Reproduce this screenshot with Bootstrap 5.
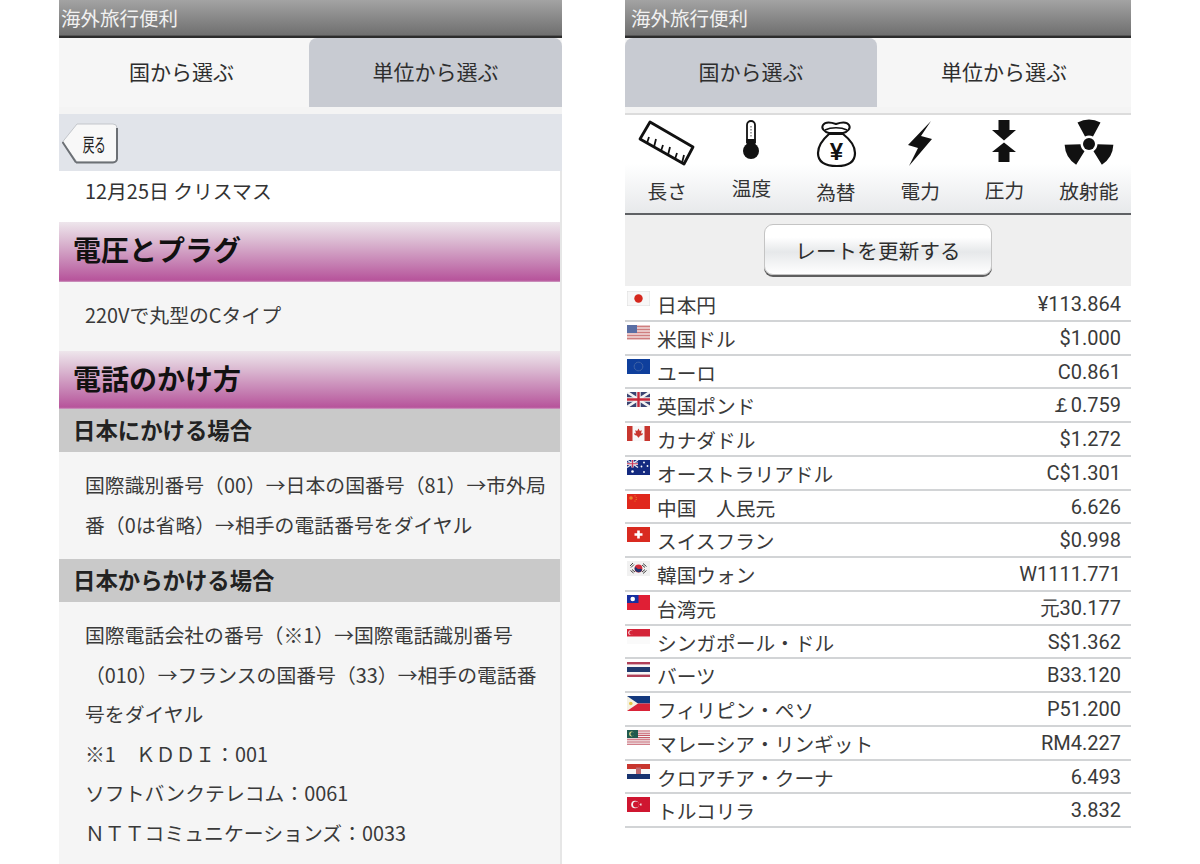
<!DOCTYPE html>
<html lang="ja">
<head>
<meta charset="utf-8">
<title>海外旅行便利</title>
<link rel="stylesheet" href="https://cdn.jsdelivr.net/npm/bootstrap@5.3.0/dist/css/bootstrap.min.css">
<style>
html,body{height:864px;overflow:hidden;background:#fff}
body{font-family:"Noto Sans CJK JP","Noto Sans",sans-serif;color:#333;font-size:19.85px}
.stage{padding-left:59px;gap:63px;height:864px}
.phone-l{width:503px;height:864px;overflow:hidden;flex:none}
.phone-r{width:506px;height:864px;overflow:hidden;flex:none}
.appbar{height:38px;background:linear-gradient(#a3a3a3,#6e6e6e);border-bottom:2px solid #2c2c2c;box-shadow:inset 0 -1px 0 #555;color:#f1f1f1;font-size:19.5px;line-height:35px;padding-left:2px;box-sizing:border-box}
.phone-r .appbar{padding-left:6px}
.tabset{height:69px;background:#f6f6f6}
.tabcell{flex:1 1 50%;font-size:21px;line-height:67px;text-align:center;color:#2e2e2e;background:#f6f6f6}
.tab-off{background:#c8cbd2;border-radius:8px 8px 0 0}
.phone-l .tabcell:first-child{flex:0 0 250px;padding-right:5px}
.phone-r .tabcell:first-child{flex:0 0 252px}
.stripe{height:7px;background:#f4f4f4}
.backbar{height:57px;background:#e1e4ea;padding:9px 0 0 3px}
.backbtn{position:relative;width:56px;height:42px;padding:0 0 0 8px;font-size:19px;line-height:34px;color:#222;border:0;background:none;border-radius:0;text-align:center}
.backbtn svg{position:absolute;left:0;top:0}
.backbtn span{position:relative;display:inline-block;transform:scaleX(.62);letter-spacing:-1px}
.sheet{border-right:2px solid #e6e6e6}
.txt-w{height:51px;background:#fff;padding-left:26px;line-height:40px}
.band{height:60px;background:linear-gradient(#eee6ec 0%,#dcbcd3 30%,#c57fb2 70%,#b7549b 97%,#cfa0c4 100%);font-size:28px;font-weight:700;color:#111;line-height:55px;padding-left:14px}
.band-b{height:58px;line-height:54px}
.subband{height:43px;background:#c9c9c9;font-size:22.4px;font-weight:700;color:#222;line-height:41px;padding-left:14px}
.para{background:#f5f5f5;padding:13px 8px 15px 26px;line-height:39.5px;color:#3a3a3a}
.para-v{height:69px;padding-top:13px}
.para-tall{height:270px}
.gap8{height:8px;background:#f4f4f4;border-bottom:2px solid #dcdcdc}
.iconrow{height:100px;background:linear-gradient(#fff 0%,#fff 50%,#e7e9eb 100%);border-bottom:2px solid #5f6164;padding-top:3px;box-sizing:border-box}
.iconcell{text-align:center;height:95px}
.iconcell svg{display:block;width:84px;height:52px;margin:0 auto}
.lbl{display:block;font-size:19.7px;line-height:24px;color:#333;margin-top:9px}
.lbl-up{margin-top:6px}
.lbl-dn{margin-top:10px}
.lbl-dn1{margin-top:8px}
.ratebar{height:71px;background:#efefef;padding-top:9px;text-align:center}
.ratebtn{width:228px;height:51px;padding:0;background:linear-gradient(#fff 0%,#fff 25%,#e6e8ea 55%,#fff 100%);border:1px solid #c4c4c4;border-radius:9px;box-shadow:0 2px 0 #5f5f5f;font-size:20.5px;letter-spacing:.2px;line-height:46px;color:#2d2d2d}
.rates{--bs-list-group-border-radius:0;background:#fff}
.rate-row{height:33.75px;padding:0 10px 0 2px;border:0;border-bottom:2px solid #d2d4d6;align-items:flex-start;color:#3a3a3a;font-size:19.7px;background:transparent;box-sizing:border-box}
.rate-row svg{flex:none;width:23px;height:15px;margin-top:3px}
.rate-name{margin-left:7px;line-height:33px;white-space:pre}
.rate-num{margin-left:auto;line-height:33px;font-family:Roboto,"Noto Sans",sans-serif;font-size:20px}
.phone-r .list-group{margin-top:2px}
</style>
</head>
<body>
<div class="d-flex stage">

<section class="phone-l">
  <div class="appbar">海外旅行便利</div>
  <div class="d-flex tabset">
    <div class="tabcell">国から選ぶ</div>
    <div class="tabcell tab-off">単位から選ぶ</div>
  </div>
  <div class="stripe"></div>
  <div class="backbar">
    <button class="btn backbtn" type="button">
      <svg width="56" height="42" viewBox="0 0 56 42"><path d="M0.5 19 15 1H51a4 4 0 0 1 4 4V35a4 4 0 0 1-4 4H15Z" fill="#f8f8f8" stroke="#c3c6cb"/><path d="M14 39.500H51a4 4 0 0 0 4-4V5M.5 19 14 39.500" fill="none" stroke="#6c7075" stroke-width="2"/></svg>
      <span>戻る</span>
    </button>
  </div>
  <div class="sheet">
    <div class="txt-w">12月25日 クリスマス</div>
    <div class="band">電圧とプラグ</div>
    <div class="para para-v">220Vで丸型のCタイプ</div>
    <div class="band band-b">電話のかけ方</div>
    <div class="subband">日本にかける場合</div>
    <div class="para">国際識別番号（00）→日本の国番号（81）→市外局番（0は省略）→相手の電話番号をダイヤル</div>
    <div class="subband">日本からかける場合</div>
    <div class="para para-tall">国際電話会社の番号（※1）→国際電話識別番号（010）→フランスの国番号（33）→相手の電話番号をダイヤル<br>※1　ＫＤＤＩ：001<br>ソフトバンクテレコム：0061<br>ＮＴＴコミュニケーションズ：0033</div>
  </div>
</section>

<section class="phone-r">
  <div class="appbar">海外旅行便利</div>
  <div class="d-flex tabset">
    <div class="tabcell tab-off">国から選ぶ</div>
    <div class="tabcell">単位から選ぶ</div>
  </div>
  <div class="gap8"></div>
  <div class="row g-0 iconrow">
    <div class="col-2 iconcell">
      <svg viewBox="625 118 84 52"><g fill="none" stroke="#111" stroke-width="2.8" stroke-linejoin="round"><path d="M650 122 693 147 684 164 640 139Z"/></g><g stroke="#111" stroke-width="1.8"><path d="M647 143 649 137M654 147 656 139M661 151 663 145M668 155 670 147M675 159 677 153M682 163 684 155"/></g></svg>
      <span class="lbl">長さ</span>
    </div>
    <div class="col-2 iconcell">
      <svg viewBox="709 118 84 52"><path d="M747 125a4 4 0 0 1 8 0V142h-8Z" fill="#fff" stroke="#111" stroke-width="1.8"/><rect x="746.500" y="139" width="9" height="10" fill="#111"/><circle cx="751" cy="151" r="8" fill="#111"/><path d="M751 126v12" stroke="#888" stroke-width="1.500" stroke-dasharray="1.500 1.500"/></svg>
      <span class="lbl lbl-up">温度</span>
    </div>
    <div class="col-2 iconcell">
      <svg viewBox="793 118 84 52"><path d="M828 133C823 132 820 128 822 125 824 122 829 122 835 124 841 122 846 122 848 125 850 128 847 132 842 133Z" fill="#fff" stroke="#111" stroke-width="2"/><path d="M824 130C830 127 840 127 846 130" fill="none" stroke="#111" stroke-width="1.600"/><path d="M828 134C820 141 817 147 817 153 817 162 824 166 836 166 847 166 854 162 854 153 854 147 851 141 842 134Z" fill="#fff" stroke="#111" stroke-width="2.200"/><text x="835.500" y="160" text-anchor="middle" font-family="Liberation Sans,sans-serif" font-weight="700" font-size="24" fill="#111">¥</text></svg>
      <span class="lbl lbl-dn">為替</span>
    </div>
    <div class="col-2 iconcell">
      <svg viewBox="878 118 84 52"><path d="M931 121 908 145 918 148 909 166 932 139 921 136Z" fill="#111"/></svg>
      <span class="lbl">電力</span>
    </div>
    <div class="col-2 iconcell">
      <svg viewBox="962 118 84 52"><path d="M998.500 120H1009.500V130H1016L1004 140.500 992 130H998.500ZM1004 142.500 1016 152H1009.500V162H998.500V152H992Z" fill="#111"/></svg>
      <span class="lbl lbl-dn1">圧力</span>
    </div>
    <div class="col-2 iconcell">
      <svg viewBox="1046 118 84 52"><g fill="#111"><circle cx="1088" cy="144" r="6"/><path d="M1084 136.500 1076.500 122.500A25 25 0 0 1 1099.500 122.500L1092 136.500A9 9 0 0 0 1084 136.500Z"/><path d="M1084 136.500 1076.500 122.500A25 25 0 0 1 1099.500 122.500L1092 136.500A9 9 0 0 0 1084 136.500Z" transform="rotate(120 1088 144)"/><path d="M1084 136.500 1076.500 122.500A25 25 0 0 1 1099.500 122.500L1092 136.500A9 9 0 0 0 1084 136.500Z" transform="rotate(240 1088 144)"/></g></svg>
      <span class="lbl">放射能</span>
    </div>
  </div>
  <div class="ratebar"><button class="btn ratebtn" type="button">レートを更新する</button></div>
  <ul class="list-group rates">
    <li class="list-group-item d-flex rate-row"><svg viewBox="0 0 23 15"><rect width="23" height="15" fill="#f7f7f7" stroke="#ddd"/><circle cx="11.500" cy="7.500" r="4.200" fill="#d5271d"/></svg><span class="rate-name">日本円</span><span class="rate-num">¥113.864</span></li>
    <li class="list-group-item d-flex rate-row"><svg viewBox="0 0 23 15"><rect width="23" height="15" fill="#f0dcdc"/><path d="M0 1.500H23M0 4.500H23M0 7.500H23M0 10.500H23M0 13.500H23" stroke="#cf7f80" stroke-width="1.400"/><rect width="10" height="8" fill="#5a6fa5"/></svg><span class="rate-name">米国ドル</span><span class="rate-num">$1.000</span></li>
    <li class="list-group-item d-flex rate-row"><svg viewBox="0 0 23 15"><rect width="23" height="15" fill="#0f3f9c"/><circle cx="11.500" cy="7.500" r="4.300" fill="none" stroke="#7d8fb0" stroke-width=".9" stroke-dasharray="1 1.200"/></svg><span class="rate-name">ユーロ</span><span class="rate-num">C0.861</span></li>
    <li class="list-group-item d-flex rate-row"><svg viewBox="0 0 23 15"><rect width="23" height="15" fill="#3a4472"/><path d="M0 0 23 15M23 0 0 15" stroke="#f4f4f4" stroke-width="2.600"/><path d="M11.500 0V15M0 7.500H23" stroke="#f4f4f4" stroke-width="4.400"/><path d="M11.500 0V15M0 7.500H23" stroke="#c6283a" stroke-width="2.400"/></svg><span class="rate-name">英国ポンド</span><span class="rate-num">￡0.759</span></li>
    <li class="list-group-item d-flex rate-row"><svg viewBox="0 0 23 15"><rect width="23" height="15" fill="#f7f7f7"/><rect width="5.500" height="15" fill="#c8362f"/><rect x="17.500" width="5.500" height="15" fill="#c8362f"/><path d="M11.500 2.500 12.800 5 14.800 4.300 14 7.500 16 7.200 15.300 9 13 9.800 11.900 11.600H11.100L10 9.800 7.700 9 7 7.200 9 7.500 8.200 4.300 10.200 5Z" fill="#c8362f"/></svg><span class="rate-name">カナダドル</span><span class="rate-num">$1.272</span></li>
    <li class="list-group-item d-flex rate-row"><svg viewBox="0 0 23 15"><rect width="23" height="15" fill="#142a80"/><path d="M0 0 11 7.500M11 0 0 7.500" stroke="#e8e8ee" stroke-width="1.400"/><path d="M5.500 0V7.500M0 3.750H11" stroke="#e8e8ee" stroke-width="2.400"/><path d="M5.500 0V7.500M0 3.750H11" stroke="#c9385a" stroke-width="1.200"/><g fill="#fff"><circle cx="5.500" cy="11.500" r="1.300"/><circle cx="17" cy="2.500" r=".9"/><circle cx="20.500" cy="6" r=".9"/><circle cx="14.500" cy="6.500" r=".9"/><circle cx="17" cy="12" r=".9"/></g></svg><span class="rate-name">オーストラリアドル</span><span class="rate-num">C$1.301</span></li>
    <li class="list-group-item d-flex rate-row"><svg viewBox="0 0 23 15"><rect width="23" height="15" fill="#e0281c"/><g fill="#e9862a"><circle cx="4" cy="4" r="1.800"/><circle cx="8" cy="1.800" r=".6"/><circle cx="9.200" cy="3.500" r=".6"/><circle cx="9.200" cy="5.400" r=".6"/><circle cx="8" cy="7" r=".6"/></g></svg><span class="rate-name">中国　人民元</span><span class="rate-num">6.626</span></li>
    <li class="list-group-item d-flex rate-row"><svg viewBox="0 0 23 15"><rect width="23" height="15" fill="#d92a20"/><path d="M11.500 3.500V11.500M7.500 7.500H15.500" stroke="#fff" stroke-width="2.600"/></svg><span class="rate-name">スイスフラン</span><span class="rate-num">$0.998</span></li>
    <li class="list-group-item d-flex rate-row"><svg viewBox="0 0 23 15"><rect width="23" height="15" fill="#f1f1f1"/><circle cx="11.500" cy="7.500" r="3.900" fill="#cf2a3a"/><path d="M7.800 6.300A3.900 3.900 0 0 0 15.200 8.700C14 7 12 8 11.500 8 10 8 9.500 5.800 7.800 6.300Z" fill="#20356f"/><path d="M3 5 6 2M4 6.500 7 3.500M16 2.500 19.500 5.500M15 4 18 6.500M3.500 9.500 6.500 12M5 8.500 8 11M16 12.500 19.500 9.500M15 11 18 8.500" stroke="#444" stroke-width="1"/></svg><span class="rate-name">韓国ウォン</span><span class="rate-num">W1111.771</span></li>
    <li class="list-group-item d-flex rate-row"><svg viewBox="0 0 23 15"><rect width="23" height="15" fill="#e01f35"/><rect width="11.500" height="8" fill="#172fa0"/><circle cx="5.700" cy="4" r="2.300" fill="#fff"/></svg><span class="rate-name">台湾元</span><span class="rate-num">元30.177</span></li>
    <li class="list-group-item d-flex rate-row"><svg viewBox="0 0 23 15"><rect width="23" height="15" fill="#fafafa"/><rect width="23" height="7.500" fill="#d42338"/><circle cx="3.600" cy="3.700" r="2.400" fill="#fff"/><circle cx="4.400" cy="3.700" r="2.200" fill="#d42338"/></svg><span class="rate-name">シンガポール・ドル</span><span class="rate-num">S$1.362</span></li>
    <li class="list-group-item d-flex rate-row"><svg viewBox="0 0 23 15"><rect width="23" height="15" fill="#f7f7f7"/><rect width="23" height="2.400" fill="#b04058"/><rect y="12.600" width="23" height="2.400" fill="#b04058"/><rect y="5" width="23" height="5" fill="#1f3a6e"/></svg><span class="rate-name">バーツ</span><span class="rate-num">B33.120</span></li>
    <li class="list-group-item d-flex rate-row"><svg viewBox="0 0 23 15"><rect width="23" height="7.500" fill="#14397e"/><rect y="7.500" width="23" height="7.500" fill="#d92338"/><path d="M0 0 11 7.500 0 15Z" fill="#f5f2e4"/><circle cx="3.800" cy="7.500" r="1.800" fill="#e6c64a"/></svg><span class="rate-name">フィリピン・ペソ</span><span class="rate-num">P51.200</span></li>
    <li class="list-group-item d-flex rate-row"><svg viewBox="0 0 23 15"><rect width="23" height="15" fill="#f4f4f4"/><path d="M0 1H23M0 3.200H23M0 5.400H23M0 7.600H23M0 9.800H23M0 12H23M0 14.200H23" stroke="#c65a68" stroke-width="1.100"/><rect width="11" height="8" fill="#1f5a4e"/><circle cx="4.500" cy="4" r="2.400" fill="#e8e08a"/><circle cx="5.400" cy="4" r="2" fill="#1f5a4e"/></svg><span class="rate-name">マレーシア・リンギット</span><span class="rate-num">RM4.227</span></li>
    <li class="list-group-item d-flex rate-row"><svg viewBox="0 0 23 15"><rect width="23" height="15" fill="#f8f8f8"/><rect width="23" height="5" fill="#c8362f"/><rect y="10" width="23" height="5" fill="#16326f"/><rect x="9" y="3.500" width="5" height="6.500" fill="#c06a70"/></svg><span class="rate-name">クロアチア・クーナ</span><span class="rate-num">6.493</span></li>
    <li class="list-group-item d-flex rate-row"><svg viewBox="0 0 23 15"><rect width="23" height="15" fill="#cf1630"/><circle cx="8" cy="7.500" r="3.800" fill="#f2f2f2"/><circle cx="9" cy="7.500" r="3" fill="#cf1630"/><path d="M12 7.500 15.200 6.400 13.200 9.100V5.900L15.200 8.600Z" fill="#f2f2f2"/></svg><span class="rate-name">トルコリラ</span><span class="rate-num">3.832</span></li>
  </ul>
</section>

</div>
<script src="https://cdn.jsdelivr.net/npm/bootstrap@5.3.0/dist/js/bootstrap.bundle.min.js"></script>
</body>
</html>
